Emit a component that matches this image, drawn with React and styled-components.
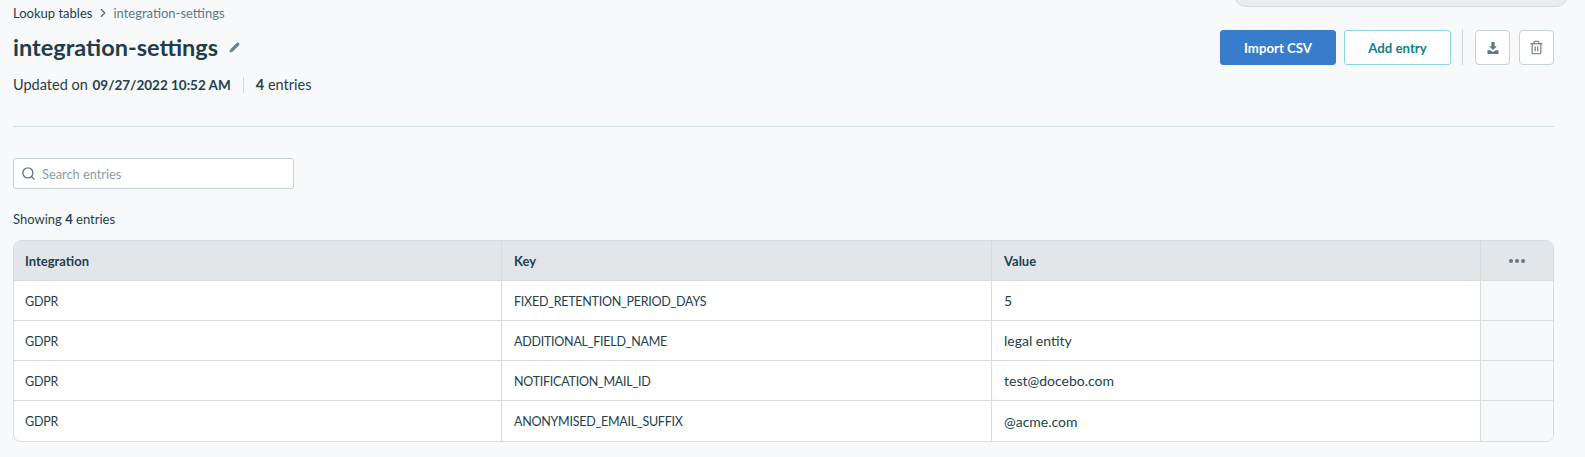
import React from 'react'
import styled, { createGlobalStyle } from 'styled-components'
import { Search, ChevronRight, Pencil, Trash2 } from 'lucide-react'

const GlobalStyle = createGlobalStyle`
  html, body {
    margin: 0;
    background: #f7f9fb;
    height: 100%;
    overflow: hidden;
  }
  body {
    font-family: "Lato", "Noto Sans", sans-serif;
    color: #233f4d;
  }
`

const rows = [
  ['GDPR', 'FIXED_RETENTION_PERIOD_DAYS', '5'],
  ['GDPR', 'ADDITIONAL_FIELD_NAME', 'legal entity'],
  ['GDPR', 'NOTIFICATION_MAIL_ID', 'test@docebo.com'],
  ['GDPR', 'ANONYMISED_EMAIL_SUFFIX', '@acme.com'],
]

const DownloadIcon = () => (
  <svg width="14" height="14" viewBox="0 0 14 14" fill="#5f7886">
    <path d="M5.4 1h3.2v4.2h2.3L7 9 3.1 5.2h2.3z" />
    <path d="M1.5 9.2h2.8L7 11l2.7-1.8h2.8V13h-11z" />
  </svg>
)

const App = () => {
  return (
    <Page>
      <GlobalStyle />
      <TopPopup />
      <Header>
        <div>
          <Breadcrumb>
            <span>Lookup tables</span>
            <ChevronRight size={14} strokeWidth={2} color="#4f6a78" />
            <Current>integration-settings</Current>
          </Breadcrumb>
          <TitleRow>
            <Title>integration-settings</Title>
            <Pencil size={11} fill="#6b8290" color="#6b8290" />
          </TitleRow>
          <Meta>
            <span>Updated on <DateText>09/27/2022 10:52 AM</DateText></span>
            <MetaSep />
            <span><b>4</b> entries</span>
          </Meta>
        </div>
        <Actions>
          <PrimaryButton>Import CSV</PrimaryButton>
          <SecondaryButton>Add entry</SecondaryButton>
          <ActionSep />
          <IconButton><DownloadIcon /></IconButton>
          <IconButton><Trash2 size={15} color="#5f7886" strokeWidth={1.8} /></IconButton>
        </Actions>
      </Header>
      <Divider />
      <SearchBox>
        <Search size={15} color="#5f7886" strokeWidth={2.2} />
        <SearchText>Search entries</SearchText>
      </SearchBox>
      <Showing>Showing <b>4</b> entries</Showing>
      <Table>
        <HeadCell $first>Integration</HeadCell>
        <HeadCell>Key</HeadCell>
        <HeadCell>Value</HeadCell>
        <MenuCell>
          <Dot /><Dot /><Dot />
        </MenuCell>
        {rows.map((row, i) => (
          <React.Fragment key={row[1]}>
            <Cell $first $caps $last={i === rows.length - 1}>{row[0]}</Cell>
            <Cell $caps $last={i === rows.length - 1}>{row[1]}</Cell>
            <Cell $last={i === rows.length - 1}>{row[2]}</Cell>
            <EmptyCell $last={i === rows.length - 1} />
          </React.Fragment>
        ))}
      </Table>
    </Page>
  )
}

export default App

const Page = styled.div`
  position: relative;
  height: 457px;
  padding: 0 31px 0 13px;
  box-sizing: border-box;
`
const TopPopup = styled.div`
  position: absolute;
  top: -20px;
  left: 1234px;
  width: 334px;
  height: 27px;
  background: #ececee;
  border: 1px solid #d5d8da;
  border-radius: 12px;
  box-sizing: border-box;
`
const Header = styled.div`
  display: flex;
  justify-content: space-between;
  align-items: flex-start;
  height: 126px;
  box-sizing: border-box;
`
const Breadcrumb = styled.div`
  display: flex;
  align-items: center;
  gap: 3.5px;
  height: 14px;
  margin-top: 6px;
  font-size: 13px;
  line-height: 14px;
`
const Current = styled.span`
  color: #5f7886;
`
const TitleRow = styled.div`
  display: flex;
  align-items: center;
  gap: 11px;
  margin-top: 10px;
  height: 34px;
`
const Title = styled.h1`
  margin: 0;
  font-size: 23.5px;
  line-height: 34px;
  font-weight: 700;
  color: #1f3d4b;
`
const Meta = styled.div`
  display: flex;
  align-items: center;
  gap: 12px;
  margin-top: 11px;
  font-size: 14.5px;
  line-height: 20px;
`
const DateText = styled.b`
  font-size: 13.5px;
  margin-left: 1px;
`
const MetaSep = styled.i`
  width: 1px;
  height: 16px;
  background: #d3dade;
`
const Actions = styled.div`
  display: flex;
  align-items: center;
  margin-top: 30px;
  height: 35px;
`
const BaseButton = styled.button`
  height: 35px;
  box-sizing: border-box;
  border-radius: 3px;
  font-family: inherit;
  font-size: 13.2px;
  font-weight: 700;
  padding: 0;
`
const PrimaryButton = styled(BaseButton)`
  width: 116px;
  background: #377dcb;
  border: 1px solid #377dcb;
  color: #ffffff;
`
const SecondaryButton = styled(BaseButton)`
  width: 107px;
  margin-left: 8px;
  background: #ffffff;
  border: 1px solid #8ad6da;
  color: #10808c;
`
const ActionSep = styled.i`
  width: 1px;
  height: 35px;
  margin: 0 12px 0 11px;
  background: #ccd5da;
`
const IconButton = styled.button`
  display: flex;
  align-items: center;
  justify-content: center;
  width: 35px;
  height: 35px;
  padding: 0;
  box-sizing: border-box;
  background: #ffffff;
  border: 1px solid #c7d1d8;
  border-radius: 4px;
  & + & {
    margin-left: 9px;
  }
`
const Divider = styled.div`
  height: 1px;
  background: #d3dde4;
`
const SearchBox = styled.div`
  display: flex;
  align-items: center;
  gap: 6px;
  margin-top: 31px;
  width: 281px;
  height: 31px;
  padding-left: 7px;
  box-sizing: border-box;
  background: #ffffff;
  border: 1px solid #c7d1d8;
  border-radius: 3px;
`
const SearchText = styled.span`
  font-size: 12.8px;
  color: #8c9ea9;
`
const Showing = styled.div`
  margin-top: 20px;
  font-size: 13px;
  line-height: 20px;
`
const Table = styled.div`
  display: grid;
  grid-template-columns: 488px 490px 489px 72px;
  grid-auto-rows: 40px;
  margin-top: 11px;
  box-sizing: border-box;
  background: #ffffff;
  border: 1px solid #d5dde2;
  border-radius: 8px;
  overflow: hidden;
  font-size: 13px;
`
const HeadCell = styled.div`
  display: flex;
  align-items: center;
  padding-left: ${(p) => (p.$first ? '11px' : '12px')};
  box-sizing: border-box;
  background: #e3e6e9;
  border-right: 1px solid #d5dde2;
  border-bottom: 1px solid #d5dde2;
  font-weight: 700;
`
const MenuCell = styled.div`
  display: flex;
  align-items: center;
  justify-content: center;
  gap: 2px;
  background: #e3e6e9;
  border-bottom: 1px solid #d5dde2;
  box-sizing: border-box;
`
const Dot = styled.i`
  width: 4px;
  height: 4px;
  border-radius: 50%;
  background: #5f7886;
`
const Cell = styled.div`
  display: flex;
  align-items: center;
  padding-left: ${(p) => (p.$first ? '11px' : '12px')};
  padding-top: ${(p) => (p.$caps ? '1px' : '0')};
  box-sizing: border-box;
  font-size: ${(p) => (p.$caps ? '12.5px' : '14px')};
  letter-spacing: ${(p) => (p.$caps ? '-0.25px' : '0')};
  border-right: 1px solid #d5dde2;
  border-bottom: ${(p) => (p.$last ? 'none' : '1px solid #d5dde2')};
`
const EmptyCell = styled.div`
  background: #f6f8fa;
  box-sizing: border-box;
  border-bottom: ${(p) => (p.$last ? 'none' : '1px solid #d5dde2')};
`
